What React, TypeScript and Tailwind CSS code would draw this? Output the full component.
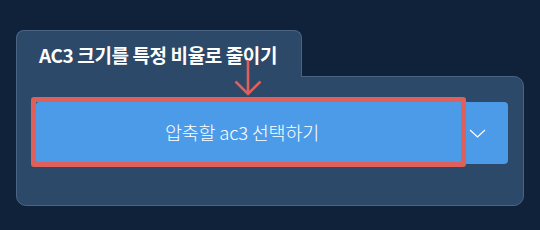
import React from 'react';

const font = { fontFamily: '"Noto Sans CJK KR", "Noto Sans", sans-serif' };

const App: React.FC = () => {
  return (
    <div className="w-[540px] h-[230px] bg-[#10223a] overflow-hidden relative" style={font}>
      <div className="pt-[30px] pl-4">
        {/* Tab */}
        <div className="relative z-10 w-[286px] h-[47px] -mb-px bg-[#2c4969] border border-b-0 border-[#4b6483] rounded-t-[8px] flex items-center pl-[22px]">
          <span className="text-white text-[19px] font-bold tracking-[-0.4px] leading-none">
            AC3 크기를 특정 비율로 줄이기
          </span>
        </div>

        {/* Panel */}
        <div className="w-[508px] h-[130px] bg-[#2c4969] border border-[#4b6483] rounded-b-[10px] rounded-tr-[10px] pt-[25px] pl-[19px]">
          <div className="relative flex w-[472px] h-[62px]">
            <button className="flex-1 h-full bg-[#4c9be8] rounded-l-[3px] flex items-center justify-center pl-[2px] text-white text-[18.5px] font-light tracking-[-0.2px]">
              압축할 ac3 선택하기
            </button>
            <button className="w-[62px] h-full bg-[#4c9be8] rounded-r-[4px] flex items-center justify-center">
              <svg width="17" height="9" viewBox="0 0 17 9" fill="none">
                <path d="M1 1l7.5 7L16 1" stroke="white" strokeWidth="1.2" />
              </svg>
            </button>
            {/* highlight box */}
            <div className="absolute left-[-5px] top-[-5px] w-[435px] h-[70px] border-[5px] border-[#df5f5a] rounded-[3px] pointer-events-none" />
          </div>
        </div>
      </div>

      {/* pointer arrow */}
      <svg className="absolute z-20 left-[233px] top-[58px]" width="32" height="40" viewBox="0 0 32 40" fill="none">
        <path d="M15 2v34" stroke="#df5f5a" strokeWidth="2.6" />
        <path d="M2.5 23.5l12.5 12.5 12.5-12.5" stroke="#df5f5a" strokeWidth="2.6" />
      </svg>
    </div>
  );
};

export default App;
